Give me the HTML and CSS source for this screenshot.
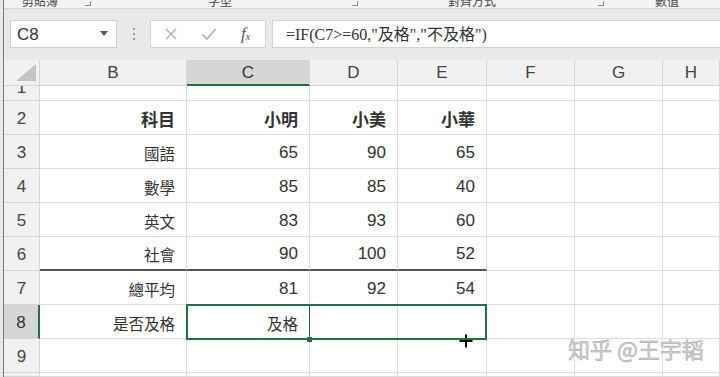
FILE: index.html
```html
<!DOCTYPE html>
<html lang="zh-Hant">
<head>
<meta charset="utf-8">
<title>Excel</title>
<link rel="stylesheet" href="styles.css">
</head>
<body>
<div class="window">
  <div class="ribbon">
    <span class="grp g1">剪貼簿</span>
    <span class="launch l1"></span>
    <span class="grp g2">字型</span>
    <span class="launch l2"></span>
    <span class="grp g3">對齊方式</span>
    <span class="launch l3"></span>
    <span class="grp g4">數值</span>
  </div>
  <div class="fbar">
    <div class="namebox"><span>C8</span>
      <svg class="arrow" width="8" height="5" viewBox="0 0 8 5"><path d="M0 0H8L4 5Z" fill="#555"/></svg>
    </div>
    <div class="dots"><i></i><i></i><i></i></div>
    <div class="btns">
      <svg width="14" height="14" viewBox="0 0 14 14"><path d="M2 2L12 12M12 2L2 12" stroke="#b0b0b0" stroke-width="1.4"/></svg>
      <svg width="16" height="14" viewBox="0 0 16 14"><path d="M1.5 7.5L6 12L14.5 2" stroke="#b0b0b0" stroke-width="1.6" fill="none"/></svg>
      <span class="fx">f<sub>x</sub></span>
    </div>
    <div class="formula">=IF(C7&gt;=60,"及格","不及格")</div>
  </div>
  <div class="sheet">
    <div class="h corner"><svg width="20" height="17" viewBox="0 0 20 17"><path d="M0 17H20V0Z" fill="#c4c4c4"/></svg></div>
    <div class="h col">B</div>
    <div class="h col selh">C</div>
    <div class="h col">D</div>
    <div class="h col">E</div>
    <div class="h col">F</div>
    <div class="h col">G</div>
    <div class="h col">H</div>

    <div class="h row r1"><span>1</span></div>
    <div class="c"></div><div class="c"></div><div class="c"></div><div class="c"></div><div class="c"></div><div class="c"></div><div class="c"></div>

    <div class="h row">2</div>
    <div class="c t b">科目</div><div class="c t b">小明</div><div class="c t b">小美</div><div class="c t b">小華</div><div class="c"></div><div class="c"></div><div class="c"></div>

    <div class="h row">3</div>
    <div class="c t">國語</div><div class="c">65</div><div class="c">90</div><div class="c">65</div><div class="c"></div><div class="c"></div><div class="c"></div>

    <div class="h row">4</div>
    <div class="c t">數學</div><div class="c">85</div><div class="c">85</div><div class="c">40</div><div class="c"></div><div class="c"></div><div class="c"></div>

    <div class="h row">5</div>
    <div class="c t">英文</div><div class="c">83</div><div class="c">93</div><div class="c">60</div><div class="c"></div><div class="c"></div><div class="c"></div>

    <div class="h row">6</div>
    <div class="c t thick">社會</div><div class="c thick">90</div><div class="c thick">100</div><div class="c thick">52</div><div class="c"></div><div class="c"></div><div class="c"></div>

    <div class="h row">7</div>
    <div class="c t">總平均</div><div class="c">81</div><div class="c">92</div><div class="c">54</div><div class="c"></div><div class="c"></div><div class="c"></div>

    <div class="h row selr">8</div>
    <div class="c t">是否及格</div>
    <div class="c t activecell">及格<span class="sel"></span><span class="handle"></span></div>
    <div class="c"></div><div class="c"></div><div class="c"></div><div class="c"></div><div class="c"></div>

    <div class="h row">9</div>
    <div class="c"></div><div class="c"></div><div class="c"></div><div class="c"></div><div class="c"></div><div class="c"></div><div class="c"></div>

    <div class="h row"></div>
    <div class="c"></div><div class="c"></div><div class="c"></div><div class="c"></div><div class="c"></div><div class="c"></div><div class="c"></div>
  </div>
  <div class="watermark">知乎 @王宇韬</div>
  <svg class="cursor" width="16" height="16" viewBox="0 0 16 16">
    <path d="M8 1V15M1 8H15" stroke="#fff" stroke-width="4.5"/>
    <path d="M8 1.5V14.5M1.5 8H14.5" stroke="#111" stroke-width="2"/>
  </svg>
</div>
</body>
</html>
```

FILE: styles.css
```css
* { box-sizing: border-box; }
html, body { margin: 0; padding: 0; }
body {
  width: 720px;
  height: 377px;
  overflow: hidden;
  background: #e9e9e9;
  font-family: "Liberation Sans", "Noto Sans CJK TC", sans-serif;
  color: #333;
}
.window {
  position: relative;
  margin-left: 3px;
  border-left: 1px solid #6f7f76;
  height: 377px;
  overflow: hidden;
}
.ribbon {
  height: 9px;
  background: #f4f4f4;
  border-bottom: 1px solid #d6d6d6;
  overflow: hidden;
  display: flex;
  align-items: flex-start;
  font-family: "Noto Sans CJK TC", sans-serif;
  font-size: 12px;
  color: #444;
}
.grp {
  display: block;
  line-height: 12px;
  margin-top: -5px;
  white-space: nowrap;
}
.g1 { margin-left: 18px; }
.g2 { margin-left: 117px; }
.g3 { margin-left: 90px; }
.g4 { margin-left: 51px; }
.launch {
  display: block;
  width: 6px;
  height: 5px;
  border-right: 1px solid #8a8a8a;
  border-bottom: 1px solid #8a8a8a;
  margin-top: 1px;
}
.l1 { margin-left: 27px; }
.l2 { margin-left: 120px; }
.l3 { margin-left: 102px; }

.fbar {
  height: 51px;
  display: flex;
  align-items: flex-start;
  padding-top: 11px;
  background: #e9e9e9;
}
.namebox {
  margin-left: 6px;
  width: 107px;
  height: 28px;
  background: #fff;
  border: 1px solid #cfcfcf;
  display: flex;
  align-items: center;
  justify-content: space-between;
  padding: 2px 8px 0 6px;
  font-size: 17px;
  color: #333;
}
.arrow { margin-bottom: 3px; }
.dots {
  width: 33px;
  height: 28px;
  display: flex;
  flex-direction: column;
  align-items: center;
  justify-content: center;
  gap: 3px;
}
.dots i {
  display: block;
  width: 2px;
  height: 2px;
  background: #9a9a9a;
}
.btns {
  width: 116px;
  height: 28px;
  background: #fff;
  border: 1px solid #d3d3d3;
  display: flex;
  align-items: center;
  padding-left: 13px;
  gap: 23px;
}
.fx {
  font-family: "Liberation Serif", serif;
  font-style: italic;
  font-size: 17px;
  color: #555;
  margin-left: 1px;
}
.fx sub { font-size: 10px; vertical-align: -1px; }
.formula {
  margin-left: 6px;
  flex: 1;
  height: 28px;
  background: #fff;
  border: 1px solid #d3d3d3;
  border-right: none;
  padding: 3px 0 0 13px;
  font-family: "Liberation Serif", "Noto Sans CJK TC", serif;
  font-size: 16px;
  line-height: 22px;
  color: #333;
}

.sheet {
  display: grid;
  grid-template-columns: 36px 147px 123px 88px 89px 88px 88px 1fr;
  grid-template-rows: 26px 15px repeat(8, 34px) 1fr;
  height: 317px;
  background: #fff;
}
.h {
  background: #f1f1f1;
  border-right: 1px solid #d5d5d5;
  border-bottom: 1px solid #d5d5d5;
  display: flex;
  align-items: center;
  justify-content: center;
  font-size: 17px;
  color: #444;
  overflow: hidden;
}
.corner {
  align-items: flex-end;
  justify-content: flex-end;
  padding: 0 3px 4px 0;
}
.col { padding-top: 1px; }
.selh {
  background: #d6d6d6;
  border-bottom: 2px solid #217346;
  color: #333;
}
.row { padding-top: 2px; }
.r1 { align-items: flex-start; }
.r1 span { display: block; margin-top: -10px; line-height: 20px; }
.selr {
  background: #d6d6d6;
  border-right: 2px solid #217346;
  color: #333;
}
.c {
  border-right: 1px solid #dcdcdc;
  border-bottom: 1px solid #dcdcdc;
  display: flex;
  align-items: center;
  justify-content: flex-end;
  padding: 2px 11px 0 0;
  font-size: 17px;
  color: #333;
  overflow: hidden;
}
.t {
  font-family: "Noto Sans CJK TC", sans-serif;
  font-size: 15.5px;
}
.b { font-weight: 700; font-size: 17px; }
.thick { border-bottom: 2px solid #555; }

.activecell {
  position: relative;
  overflow: visible;
  border-right: 1px solid #217346;
  z-index: 2;
}
.sel {
  position: absolute;
  left: -1px;
  top: -1px;
  width: 301px;
  height: 36px;
  border: 2px solid #217346;
  pointer-events: none;
}
.handle {
  position: absolute;
  right: -3px;
  bottom: -4px;
  width: 5px;
  height: 5px;
  background: #217346;
}
.watermark {
  position: absolute;
  left: 564px;
  top: 332px;
  font-family: "Noto Sans CJK SC", sans-serif;
  font-size: 22px;
  color: #d2d2d2;
  -webkit-text-stroke: 0.5px #a8a8a8;
}
.cursor {
  position: absolute;
  left: 454px;
  top: 333px;
}
```
